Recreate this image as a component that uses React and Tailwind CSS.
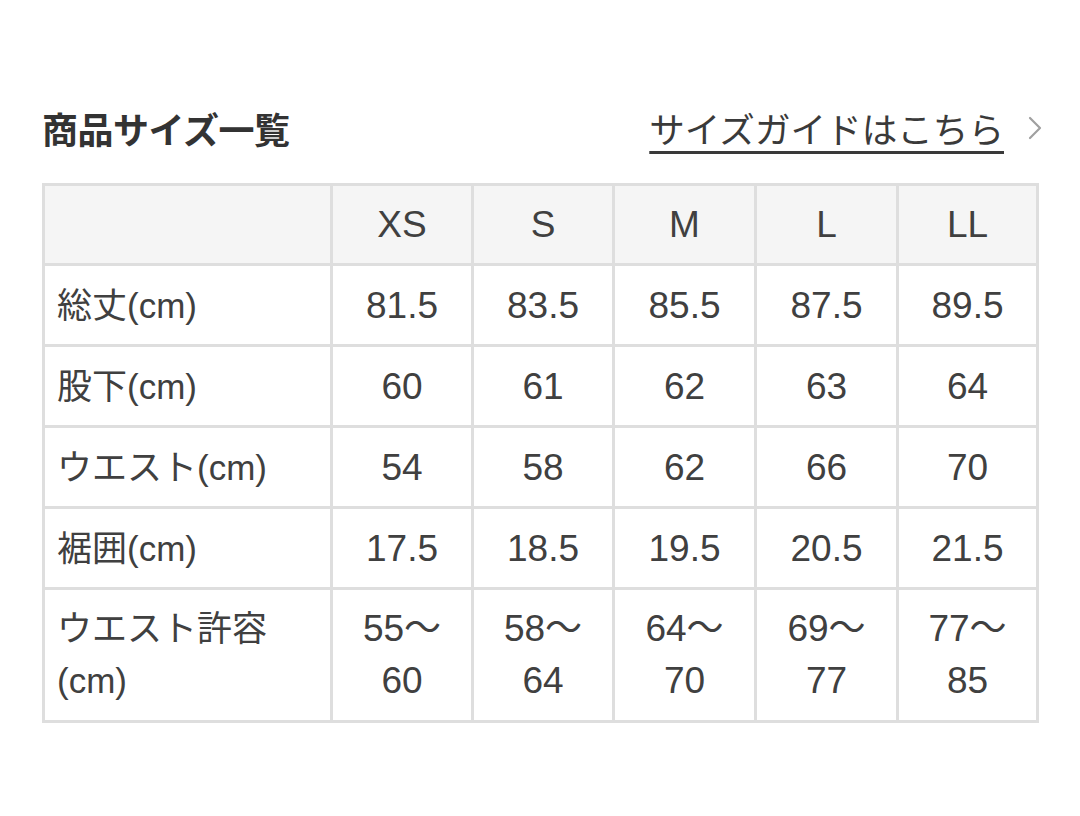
export default function App() {
  const sizes = ["XS", "S", "M", "L", "LL"];
  const rows = [
    { label: "総丈(cm)", vals: ["81.5", "83.5", "85.5", "87.5", "89.5"] },
    { label: "股下(cm)", vals: ["60", "61", "62", "63", "64"] },
    { label: "ウエスト(cm)", vals: ["54", "58", "62", "66", "70"] },
    { label: "裾囲(cm)", vals: ["17.5", "18.5", "19.5", "20.5", "21.5"] },
  ];
  const last = [
    ["55〜", "60"],
    ["58〜", "64"],
    ["64〜", "70"],
    ["69〜", "77"],
    ["77〜", "85"],
  ];
  const font = { fontFamily: '"Liberation Sans", "Noto Sans CJK JP", sans-serif' };
  return (
    <div className="w-[1080px] h-[816px] bg-white pt-[102px] px-[42px] text-[#404040]" style={font}>
      <div className="flex items-center justify-between h-[52px]">
        <h2 className="text-[36px] font-bold text-[#333] leading-none tracking-[-0.5px]" style={{ fontFamily: '"Noto Sans CJK JP", sans-serif' }}>
          商品サイズ一覧
        </h2>
        <a className="flex items-center mr-[-4px]">
          <span
            className="text-[35.6px] leading-none text-[#3a3a3a] underline decoration-[3px] underline-offset-[8px] decoration-[#3a3a3a]"
            style={{ fontFamily: '"Noto Sans CJK JP", sans-serif' }}
          >
            サイズガイドはこちら
          </span>
          <svg className="ml-[24px]" width="14" height="26" viewBox="0 0 14 26" fill="none">
            <path d="M2 3 L12 13 L2 23" stroke="#a0a0a0" strokeWidth="2.2" strokeLinecap="round" strokeLinejoin="round" />
          </svg>
        </a>
      </div>
      <table className="mt-[29px] w-[994px] table-fixed border-collapse">
        <colgroup>
          <col className="w-[288px]" />
          <col className="w-[141px]" />
          <col className="w-[141px]" />
          <col className="w-[142px]" />
          <col className="w-[142px]" />
          <col className="w-[140px]" />
        </colgroup>
        <tbody>
          <tr className="bg-[#f5f5f5]">
            <td className="border-[3px] border-[#dedede] h-[80px]"></td>
            {sizes.map((s) => (
              <td key={s} className="border-[3px] border-[#dedede] h-[80px] text-center text-[37px] leading-none">
                {s}
              </td>
            ))}
          </tr>
          {rows.map((r) => (
            <tr key={r.label}>
              <td className="border-[3px] border-[#dedede] h-[81px] pl-[12px] text-[35px] leading-none">{r.label}</td>
              {r.vals.map((v, i) => (
                <td key={i} className="border-[3px] border-[#dedede] h-[81px] text-center text-[37px] leading-none">
                  {v}
                </td>
              ))}
            </tr>
          ))}
          <tr>
            <td className="border-[3px] border-[#dedede] h-[133px] pl-[12px] text-[35px] leading-[52px]">
              ウエスト許容
              <br />
              (cm)
            </td>
            {last.map((p, i) => (
              <td key={i} className="border-[3px] border-[#dedede] h-[133px] text-center text-[37px] leading-[52px]">
                {p[0]}
                <br />
                {p[1]}
              </td>
            ))}
          </tr>
        </tbody>
      </table>
    </div>
  );
}
